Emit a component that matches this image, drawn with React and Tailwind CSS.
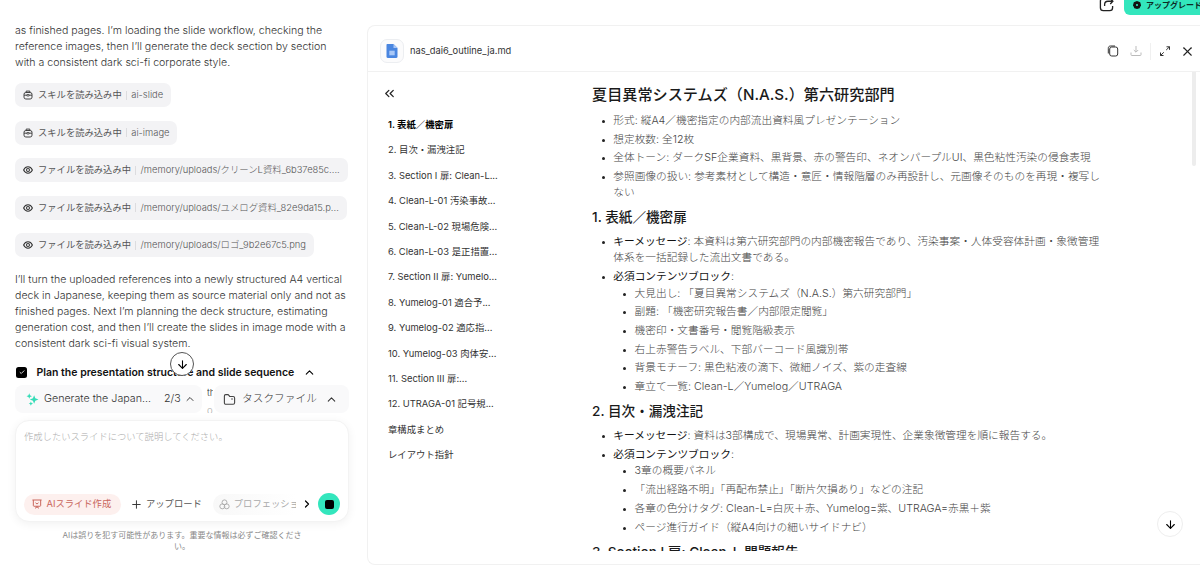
import React from 'react';
import { ArrowDown, ChevronRight, ChevronUp, ChevronsLeft, Plus, X } from 'lucide-react';

const toolCalls = [
  { icon: 'skill', label: 'スキルを読み込み中', value: 'ai-slide' },
  { icon: 'skill', label: 'スキルを読み込み中', value: 'ai-image' },
  { icon: 'eye', label: 'ファイルを読み込み中', value: '/memory/uploads/クリーンL資料_6b37e85c....' },
  { icon: 'eye', label: 'ファイルを読み込み中', value: '/memory/uploads/ユメログ資料_82e9da15.p...' },
  { icon: 'eye', label: 'ファイルを読み込み中', value: '/memory/uploads/ロゴ_9b2e67c5.png' },
];

const outline = [
  '1. 表紙／機密扉',
  '2. 目次・漏洩注記',
  '3. Section I 扉: Clean-L...',
  '4. Clean-L-01 汚染事故...',
  '5. Clean-L-02 現場危険...',
  '6. Clean-L-03 是正措置...',
  '7. Section II 扉: Yumelo...',
  '8. Yumelog-01 適合予...',
  '9. Yumelog-02 適応指...',
  '10. Yumelog-03 肉体安...',
  '11. Section III 扉:...',
  '12. UTRAGA-01 記号規...',
  '章構成まとめ',
  'レイアウト指針',
];

const intro = [
  ['形式: 縦A4／機密指定の内部流出資料風プレゼンテーション'],
  ['想定枚数: 全12枚'],
  ['全体トーン: ダークSF企業資料、黒背景、赤の警告印、ネオンパープルUI、黒色粘性汚染の侵食表現'],
  ['参照画像の扱い: 参考素材として構造・意匠・情報階層のみ再設計し、元画像そのものを再現・複写し', 'ない'],
];

const sections = [
  {
    title: '1. 表紙／機密扉',
    message: ['本資料は第六研究部門の内部機密報告であり、汚染事案・人体受容体計画・象徴管理', '体系を一括記録した流出文書である。'],
    blocks: [
      '大見出し: 「夏目異常システムズ（N.A.S.）第六研究部門」',
      '副題: 「機密研究報告書／内部限定閲覧」',
      '機密印・文書番号・閲覧階級表示',
      '右上赤警告ラベル、下部バーコード風識別帯',
      '背景モチーフ: 黒色粘液の滴下、微細ノイズ、紫の走査線',
      '章立て一覧: Clean-L／Yumelog／UTRAGA',
    ],
  },
  {
    title: '2. 目次・漏洩注記',
    message: ['資料は3部構成で、現場異常、計画実現性、企業象徴管理を順に報告する。'],
    blocks: [
      '3章の概要パネル',
      '「流出経路不明」「再配布禁止」「断片欠損あり」などの注記',
      '各章の色分けタグ: Clean-L=白灰＋赤、Yumelog=紫、UTRAGA=赤黒＋紫',
      'ページ進行ガイド（縦A4向けの細いサイドナビ）',
    ],
  },
];

const SkillIcon = () => (
  <svg viewBox="0 0 12 12" className="h-[10px] w-[10px] shrink-0" fill="none" stroke="#333" strokeWidth="1.1">
    <path d="M3.8 3V1.3h4.4V3" />
    <rect x="1.2" y="3" width="9.6" height="7.8" rx="2.2" />
    <path d="M1.2 6.2h3M7.8 6.2h3" />
    <rect x="4.3" y="5.5" width="3.4" height="1.6" rx=".7" />
  </svg>
);

const EyeIcon = () => (
  <svg viewBox="0 0 12 12" className="h-[10px] w-[10px] shrink-0" fill="none" stroke="#333" strokeWidth="1.25">
    <path d="M.7 6C2 3.400 3.800 2.200 6 2.200S10 3.400 11.300 6C10 8.600 8.200 9.800 6 9.800S2 8.600.7 6z" />
    <circle cx="6" cy="6" r="1.800" />
  </svg>
);

const ToolChip = ({ icon, label, value }) => (
  <div className="flex h-6 w-fit items-center rounded-[7px] bg-[#f3f3f5] pr-[8px] pl-[8px] text-[9.300px] whitespace-nowrap">
    {icon === 'skill' ? <SkillIcon /> : <EyeIcon />}
    <span className="ml-[5px] text-[#555]">{label}</span>
    <span className="mx-[4.300px] h-[9px] w-px bg-[#dcdcdf]" />
    <span className="pt-px text-[9.400px] font-light text-[#555]">{value}</span>
  </div>
);

const Bullet = ({ children }) => (
  <li className="flex">
    <span className="mt-[7px] ml-[10px] h-[3px] w-[3px] shrink-0 rounded-full bg-[#222]" />
    <div className="ml-[8.300px] min-w-0 grow whitespace-nowrap">{children}</div>
  </li>
);

const Lines = ({ lines }) =>
  lines.map((line, idx) => (
    <React.Fragment key={idx}>
      {idx > 0 && <br />}
      {line}
    </React.Fragment>
  ));

const ChatPanel = () => (
  <aside className="flex w-[367px] shrink-0 flex-col pl-[15px]">
    <p className="mt-[23px] text-[10.600px] leading-4 font-light whitespace-nowrap text-[#333]">
      as finished pages. I’m loading the slide workflow, checking the
      <br />
      reference images, then I’ll generate the deck section by section
      <br />
      with a consistent dark sci-fi corporate style.
    </p>

    <div className="mt-[12px] flex flex-col gap-[13.500px]">
      {toolCalls.map((call, idx) => (
        <ToolChip key={idx} {...call} />
      ))}
    </div>

    <p className="mt-[15px] text-[10.600px] leading-4 font-light whitespace-nowrap text-[#333]">
      I’ll turn the uploaded references into a newly structured A4 vertical
      <br />
      deck in Japanese, keeping them as source material only and not as
      <br />
      finished pages. Next I’m planning the deck structure, estimating
      <br />
      generation cost, and then I’ll create the slides in image mode with a
      <br />
      consistent dark sci-fi visual system.
    </p>

    <div className="relative mt-[12px] flex h-4 items-center">
      <span className="ml-[1px] flex h-[11px] w-[11px] items-center justify-center rounded-[2.500px] bg-black">
        <svg viewBox="0 0 8 8" className="h-[6px] w-[6px]" fill="none" stroke="#fff" strokeWidth="1.100">
          <path d="M1 4.200 3 6l4-4" />
        </svg>
      </span>
      <span className="ml-[9.500px] pt-px text-[10.500px] font-semibold whitespace-nowrap text-[#111]">
        Plan the presentation structure and slide sequence
      </span>
      <ChevronUp className="ml-[9px] h-[13px] w-[13px] text-black" />
      <span className="absolute top-[-12px] left-[155px] flex h-6 w-6 items-center justify-center rounded-full border border-[#555] bg-white">
        <ArrowDown className="h-[13px] w-[13px] text-black" />
      </span>
    </div>

    <div className="mt-[5px] flex h-7 items-center text-[10.700px] font-light text-[#333]">
      <div className="flex h-7 w-[187px] items-center rounded-[8px] bg-[#f9f9fa] pl-[11px]">
        <svg viewBox="0 0 12 12" className="h-[13px] w-[13px]" fill="#35dcb7">
          <path d="M7.500 2 8.600 4.900 11.500 6 8.600 7.100 7.500 10 6.400 7.100 3.500 6 6.400 4.900z" />
          <path d="M3 .3 3.700 2.100 5.500 2.900 3.700 3.600 3 5.400 2.300 3.600.5 2.900 2.300 2.100z" />
          <path d="M4.500 7.800 5.100 9.200 6.500 9.700 5.100 10.300 4.500 11.700 3.900 10.300 2.500 9.700 3.900 9.200z" />
        </svg>
        <span className="ml-[5px] w-[120px] pt-px whitespace-nowrap">Generate the Japan...</span>
        <span className="pt-px">2/3</span>
        <ChevronUp className="ml-[3px] h-[12px] w-[12px]" strokeWidth={1.900} />
      </div>
      <div className="ml-[5px] h-7 w-[6px] overflow-hidden text-[9.500px] leading-[15px] whitespace-nowrap">
        <div className="h-[18px]">the</div>
        <div className="text-[#aaa]">outline</div>
      </div>
      <div className="ml-[1px] flex h-7 w-[135px] items-center rounded-[8px] bg-[#f9f9fa] pl-[9px]">
        <svg viewBox="0 0 14 14" className="h-[13px] w-[13px]" fill="none" stroke="#444" strokeWidth="1.200">
          <path d="M1.500 3.300c0-.9.500-1.500 1.400-1.500h2.300c.6 0 .9.300 1.200.8l.8 1.200h3.700c1 0 1.600.6 1.600 1.600v5c0 1-.6 1.700-1.600 1.700H3.100c-1 0-1.600-.7-1.600-1.700z" />
          <path d="M8.800 6.500h1.800" />
        </svg>
        <span className="ml-[6px] pt-px text-[10.700px] whitespace-nowrap">タスクファイル</span>
        <ChevronUp className="ml-[8px] h-[13px] w-[13px]" strokeWidth={1.900} />
      </div>
    </div>

    <div className="mt-[7px] flex h-[102px] w-[334px] flex-col justify-between rounded-[14px] border border-[#f3f3f3] bg-white px-[8px] pt-[8px] pb-[6px] shadow-[0_2px_10px_rgba(0,0,0,0.06)]">
      <div className="text-[9.300px] leading-4 font-light text-[#aaa]">作成したいスライドについて説明してください。</div>
      <div className="flex h-[22px] items-center text-[9.300px] whitespace-nowrap">
        <div className="flex h-[21px] w-[98px] items-center rounded-full bg-[#fdf0ee] pl-[8px] text-[#c9665c]">
          <svg viewBox="0 0 12 12" className="h-[10px] w-[10px]" fill="none" stroke="#c9665c" strokeWidth="1.200">
            <path d="M.5 1.200h11M1.600 1.200v6.600c0 .6.300.9.900.9h7c.6 0 .9-.3.900-.9V1.200M6 8.700v1.500M3.600 11.200 6 9.400l2.400 1.800M4.200 4.500 6 6l1.800-1.500" />
          </svg>
          <span className="ml-[4.500px]">AIスライド作成</span>
        </div>
        <Plus className="ml-[9px] h-[13px] w-[13px] text-[#333]" strokeWidth={1.800} />
        <span className="ml-[3px] text-[#555]">アップロード</span>
        <div className="ml-[11px] flex h-[21px] w-[84px] items-center overflow-hidden rounded-l-full bg-gradient-to-r from-[#f8f8f8] to-white pl-[6px] text-[#aaa]">
          <svg viewBox="0 0 12 12" className="h-[11px] w-[11px] shrink-0" fill="none" stroke="#aaa" strokeWidth="1">
            <circle cx="6" cy="3.700" r="2.700" />
            <circle cx="3.600" cy="8" r="2.700" />
            <circle cx="8.400" cy="8" r="2.700" />
          </svg>
          <span className="ml-[4px] w-[63px] shrink-0 overflow-hidden">プロフェッショナル</span>
        </div>
        <ChevronRight className="ml-[5px] h-[12px] w-[12px] shrink-0 text-black" strokeWidth={2.400} />
        <span className="ml-[5px] flex h-[22px] w-[22px] shrink-0 items-center justify-center rounded-full bg-[#33e6bd]">
          <span className="h-[9px] w-[9px] rounded-[2px] bg-black" />
        </span>
      </div>
    </div>

    <p className="mt-[8px] w-[334px] text-center text-[8px] leading-[11px] text-[#888]">
      AIは誤りを犯す可能性があります。重要な情報は必ずご確認くださ
      <br />
      い。
    </p>
  </aside>
);

const PanelHeader = () => (
  <header className="flex h-[46px] shrink-0 items-center border-b border-[#f1f1f1] pt-[5px] pr-[5px] pl-[12px]">
    <span className="flex h-6 w-6 items-center justify-center rounded-[7px] border border-[#eceef1] bg-[#fbfbfc]">
      <svg viewBox="0 0 12 14" className="h-[14px] w-[12px]">
        <path d="M1.500 0h6L11.500 4v8.800c0 .7-.5 1.200-1.200 1.200H1.700C1 14 .5 13.500.5 12.800V1C.5.4.9 0 1.500 0z" fill="#4a86e0" />
        <path d="M7.500 0 11.500 4h-4z" fill="#a9c6f5" />
        <path d="M3.300 6.700h5.400v4.600H3.300z" fill="#a9c8f7" />
      </svg>
    </span>
    <span className="ml-[6px] grow text-[9.300px] text-[#333]">nas_dai6_outline_ja.md</span>
    <svg viewBox="0 0 12 12" className="h-[12px] w-[12px]" fill="none" stroke="#333" strokeWidth="1">
      <rect x="2.700" y="2" width="8" height="9" rx="2" />
      <path d="M1.300 8.500V3.300c0-1.500.8-2.300 2.300-2.300H8" />
    </svg>
    <svg viewBox="0 0 12 12" className="ml-[11px] h-[12px] w-[12px]" fill="none" stroke="#bbb" strokeWidth="1">
      <path d="M6 1v6M3.800 5 6 7.200 8.200 5M1 7.500v2.200c0 .6.300.8.800.8h8.400c.5 0 .8-.2.800-.8V7.500" />
    </svg>
    <span className="ml-[8px] h-[17px] w-px bg-[#f0f0f0]" />
    <svg viewBox="0 0 12 12" className="ml-[8px] h-[12px] w-[12px]" fill="none" stroke="#333" strokeWidth="1">
      <path d="M7.500 1.800h3v3M10.500 1.800 7.200 5M4.500 10.500h-3v-3M1.500 10.500 4.800 7.300" />
    </svg>
    <X className="ml-[9px] h-[15px] w-[15px] text-[#222]" strokeWidth={1.700} />
  </header>
);

const Outline = () => (
  <nav className="w-[224px] shrink-0 pl-[20px]">
    <ChevronsLeft className="mt-[14px] -ml-[6px] h-[15px] w-[15px] text-[#222]" strokeWidth={2} />
    <ul className="mt-[11px] text-[9.370px] whitespace-nowrap text-[#333]">
      {outline.map((item, idx) => (
        <li key={item} className={idx === 0 ? 'h-[25.400px] leading-[25.400px] font-semibold text-black' : 'h-[25.400px] leading-[25.400px]'}>
          {item}
        </li>
      ))}
    </ul>
  </nav>
);

const Document = () => (
  <article className="h-[479px] grow overflow-hidden text-[10.700px] leading-4 font-light text-[#444]">
    <h1 className="mt-[10px] h-[30px] text-[15.150px] leading-[25px] font-medium whitespace-nowrap text-[#1a1a1a]">
      夏目異常システムズ（N.A.S.）第六研究部門
    </h1>
    <ul className="mt-[1px] flex flex-col gap-[2.700px]">
      {intro.map((lines, idx) => (
        <Bullet key={idx}>
          <Lines lines={lines} />
        </Bullet>
      ))}
    </ul>
    {sections.map((section) => (
      <section key={section.title}>
        <h2 className="h-[33.300px] text-[13.600px] leading-[32px] font-medium text-[#1a1a1a]">{section.title}</h2>
        <ul className="flex flex-col gap-[2.700px]">
          <Bullet>
            <strong className="font-normal text-[#111]">キーメッセージ</strong>: <Lines lines={section.message} />
          </Bullet>
          <Bullet>
            <strong className="font-normal text-[#111]">必須コンテンツブロック</strong>:
            <ul className="mt-[0.500px] flex flex-col gap-[2.700px]">
              {section.blocks.map((block) => (
                <Bullet key={block}>{block}</Bullet>
              ))}
            </ul>
          </Bullet>
        </ul>
      </section>
    ))}
    <h2 className="h-[33.300px] text-[13.600px] leading-[32px] font-medium text-[#1a1a1a]">3. Section I 扉: Clean-L 問題報告</h2>
  </article>
);

export default function App() {
  return (
    <div className="flex h-[566px] w-[1200px] overflow-hidden bg-white font-['Inter','Noto_Sans_CJK_JP',sans-serif]">
      <ChatPanel />
      <div className="flex min-w-0 grow flex-col">
        <div className="flex h-[25px] shrink-0 items-start justify-end">
          <svg viewBox="0 0 16 16" className="-mt-[3px] mr-[10px] h-[15px] w-[15px]" fill="none" stroke="#222" strokeWidth="1.400">
            <path d="M6.500 1.500H4.600c-2 0-3.100 1.100-3.100 3.100v6.800c0 2 1.100 3.100 3.100 3.100h6.800c2 0 3.100-1.100 3.100-3.100V9.500M6 9.500V8c0-2.300 1.200-3.500 3.500-3.500h5M12 1.500l2.800 3L12 7.500" />
          </svg>
          <div className="-mt-[6px] flex h-[21px] w-[76px] items-center overflow-hidden rounded-bl-[6px] bg-[#33e6bd] pl-[9px] text-[8px] font-semibold whitespace-nowrap text-[#0d2b24]">
            <svg viewBox="0 0 8 8" className="h-[8px] w-[8px] shrink-0">
              <path d="M4 0 7.200 1.300 8 4.200 6.600 7.300 4 8 1.400 7.300 0 4.200.8 1.300z" fill="#111" />
              <circle cx="4" cy="4" r="1.100" fill="#33e6bd" />
            </svg>
            <span className="ml-[5px] w-[54px] overflow-hidden">アップグレード</span>
          </div>
        </div>
        <div className="relative flex h-[540px] flex-col rounded-tl-[8px] rounded-bl-[8px] border border-r-0 border-[#f1f1f1]">
          <PanelHeader />
          <div className="flex min-h-0 grow">
            <Outline />
            <Document />
            <div className="mr-[4px] h-[94px] w-[4px] shrink-0 rounded-b-full bg-[#ededed]" />
          </div>
          <span className="absolute top-[485px] right-[17px] flex h-[26px] w-[26px] items-center justify-center rounded-full border border-[#eee] bg-white">
            <ArrowDown className="h-[13px] w-[13px] text-black" />
          </span>
        </div>
      </div>
    </div>
  );
}
